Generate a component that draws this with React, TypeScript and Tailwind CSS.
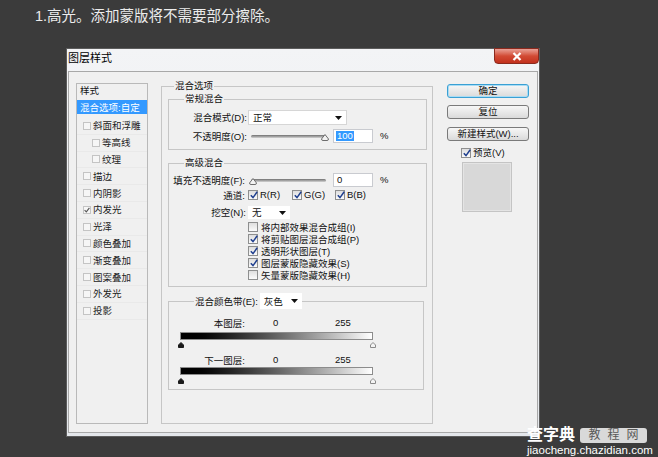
import React from 'react';

function Tick({ color = '#1f3f8f' }: { color?: string }) {
  return (
    <svg width="8" height="8" viewBox="0 0 8 8" className="absolute left-[1px] top-[0px]">
      <path d="M0.8 4.2 L3 6.6 L7.2 0.8" fill="none" stroke={color} strokeWidth="1.5" />
    </svg>
  );
}

function Check({ on }: { on?: boolean }) {
  return (
    <span className="relative inline-block w-[10px] h-[10px] shrink-0 border border-[#8e8f8f] bg-linear-to-b from-[#dedede] to-[#fbfbfb]">
      {on && <Tick />}
    </span>
  );
}

function ListCheck({ on }: { on?: boolean }) {
  return (
    <span className="relative inline-block w-[8px] h-[8px] shrink-0 border border-[#c4c4c4] bg-[#f6f6f6]">
      {on && (
        <svg width="6" height="6" viewBox="0 0 6 6" className="absolute left-0 top-0">
          <path d="M0.6 3.2 L2.3 4.9 L5.4 0.8" fill="none" stroke="#555" strokeWidth="1.1" />
        </svg>
      )}
    </span>
  );
}

function Arrow() {
  return (
    <svg width="7" height="4" viewBox="0 0 7 4">
      <path d="M0 0 L7 0 L3.5 4 Z" fill="#111" />
    </svg>
  );
}

function Knob() {
  return (
    <svg width="8" height="7" viewBox="0 0 8 7">
      <path d="M4 0.5 L7.5 5 Q7.5 6.5 6 6.5 L2 6.5 Q0.5 6.5 0.5 5 Z" fill="#f2f2f2" stroke="#6d6d6d" strokeWidth="1" />
    </svg>
  );
}

function Marker({ dark }: { dark?: boolean }) {
  return (
    <svg width="6" height="6" viewBox="0 0 6 6">
      <path
        d="M3 0.5 L5.5 3 L5.5 5.5 L0.5 5.5 L0.5 3 Z"
        fill={dark ? '#1a1a1a' : '#f4f4f4'}
        stroke={dark ? '#1a1a1a' : '#8a8a8a'}
        strokeWidth="1"
      />
    </svg>
  );
}

function Slider({ knobLeft }: { knobLeft: 'start' | 'end' }) {
  return (
    <div className="relative ml-[2px] w-[84px] h-[14px] flex items-center">
      <div className="ml-[2px] w-[75px] h-[3px] rounded-full bg-linear-to-b from-[#707070] to-[#d4d4d4]" />
      <div className={`absolute top-[5px] ${knobLeft === 'start' ? 'left-0' : 'left-[72px]'}`}>
        <Knob />
      </div>
    </div>
  );
}

const listItems: { label: string; sub?: boolean; on?: boolean }[] = [
  { label: '斜面和浮雕' },
  { label: '等高线', sub: true },
  { label: '纹理', sub: true },
  { label: '描边' },
  { label: '内阴影' },
  { label: '内发光', on: true },
  { label: '光泽' },
  { label: '颜色叠加' },
  { label: '渐变叠加' },
  { label: '图案叠加' },
  { label: '外发光' },
  { label: '投影' },
];

const options: { label: string; on: boolean }[] = [
  { label: '将内部效果混合成组(I)', on: false },
  { label: '将剪贴图层混合成组(P)', on: true },
  { label: '透明形状图层(T)', on: true },
  { label: '图层蒙版隐藏效果(S)', on: true },
  { label: '矢量蒙版隐藏效果(H)', on: false },
];

function Button({ label, primary }: { label: string; primary?: boolean }) {
  return (
    <div
      className={`w-[82px] h-[14px] flex items-center justify-center rounded-[3px] border bg-linear-to-b from-[#f7f7f7] to-[#dadada] text-[9.5px] leading-[10px] text-[#111] ${
        primary ? 'border-[#3aa0d4] shadow-[inset_0_0_0_1px_#a9dcf4]' : 'border-[#7a7a7a]'
      }`}
    >
      {label}
    </div>
  );
}

export default function App() {
  return (
    <div className="relative w-[658px] h-[457px] overflow-hidden bg-[#3b3b3b] font-['Liberation_Sans','Noto_Sans_CJK_SC',sans-serif]">
      <p className="pl-[35px] pt-[6px] text-[14.5px] leading-[20px] text-[#ececec]">1.高光。添加蒙版将不需要部分擦除。</p>

      <div className="ml-[66px] mt-[22px] w-[474px] h-[389px] flex flex-col border border-[#5c5c5c] bg-linear-to-b from-[#f3f4f6] to-[#e4e7eb]">
        <div className="h-[22px] flex items-start justify-between pl-[1px]">
          <span className="mt-[4px] text-[11px] leading-[11px] text-black">图层样式</span>
          <div className="-mt-[1px] w-[45px] h-[16px] flex items-center justify-center rounded-b-[4px] border border-[#8a2a1e] bg-linear-to-b from-[#e8a096] via-[#d24a34] to-[#c2301c]">
            <svg width="10" height="9" viewBox="0 0 10 9">
              <path d="M1.5 1 L8.5 8 M8.5 1 L1.5 8" stroke="#fff" strokeWidth="2.2" />
            </svg>
          </div>
        </div>

        <div className="ml-[1px] mr-[1px] mb-[3px] flex-1 flex items-start border border-[#a8a8a8] bg-[#f0f0f0] text-[9.5px] text-[#111]">
          {/* left style list */}
          <div className="ml-[7px] mt-[11px] w-[72px] h-[341px] border border-[#b9b9b9] bg-[#f0f0f0]">
            <div className="h-[16px] pt-[1px] pl-[3px] leading-[11px]">样式</div>
            <div className="h-[14px] flex items-center pl-[3px] bg-[#3399ff] text-white leading-[11px]">混合选项:自定</div>
            <div className="mt-[4px]">
              {listItems.map((it) => (
                <div
                  key={it.label}
                  className={`h-[16.8px] flex items-center gap-[2px] leading-[11px] text-[#222] border-b border-[#e9e9e9] ${it.sub ? 'pl-[15px]' : 'pl-[6px]'}`}
                >
                  <ListCheck on={it.on} />
                  <span>{it.label}</span>
                </div>
              ))}
            </div>
          </div>

          {/* blending options */}
          <div className="relative ml-[13px] mt-[14px] w-[272px] h-[338px] border border-[#c6c6c6]">
            <span className="absolute left-[12px] -top-[7px] px-[1px] bg-[#f0f0f0] leading-[12px]">混合选项</span>

            <div className="relative ml-[6px] mt-[12px] w-[259px] h-[51px] border border-[#c6c6c6]">
              <span className="absolute left-[15px] -top-[7px] px-[1px] bg-[#f0f0f0] leading-[12px]">常规混合</span>
              <div className="mt-[10px] h-[15px] flex items-center">
                <span className="w-[78px] text-right leading-[11px]">混合模式(D):</span>
                <div className="ml-[1px] w-[99px] h-[15px] flex items-center justify-between pl-[4px] pr-[4px] bg-white border border-[#d6d6d6]">
                  <span className="leading-[11px]">正常</span>
                  <Arrow />
                </div>
              </div>
              <div className="mt-[4px] h-[14px] flex items-center">
                <span className="w-[78px] text-right leading-[11px]">不透明度(O):</span>
                <Slider knobLeft="end" />
                <div className="w-[40px] h-[14px] flex items-center pl-[2px] bg-white border border-[#c9cbd0]">
                  <span className="px-[1px] bg-[#3399ff] text-white leading-[10px]">100</span>
                </div>
                <span className="ml-[7px] leading-[10px]">%</span>
              </div>
            </div>

            <div className="relative ml-[6px] mt-[13px] w-[259px] h-[124px] border border-[#c6c6c6]">
              <span className="absolute left-[15px] -top-[7px] px-[1px] bg-[#f0f0f0] leading-[12px]">高级混合</span>
              <div className="mt-[9px] h-[14px] flex items-center">
                <span className="w-[78px] pr-[2px] text-right leading-[11px]">填充不透明度(F):</span>
                <Slider knobLeft="start" />
                <div className="w-[40px] h-[14px] flex items-center pl-[3px] bg-white border border-[#c9cbd0]">
                  <span className="leading-[10px]">0</span>
                </div>
                <span className="ml-[7px] leading-[10px]">%</span>
              </div>
              <div className="mt-[2px] h-[12px] flex items-center">
                <span className="w-[78px] pr-[2px] text-right leading-[11px]">通道:</span>
                <div className="ml-[1px] flex items-center gap-[2px] w-[44px]">
                  <Check on />
                  <span className="leading-[10px]">R(R)</span>
                </div>
                <div className="flex items-center gap-[2px] w-[43px]">
                  <Check on />
                  <span className="leading-[10px]">G(G)</span>
                </div>
                <div className="flex items-center gap-[2px]">
                  <Check on />
                  <span className="leading-[10px]">B(B)</span>
                </div>
              </div>
              <div className="mt-[5px] h-[13px] flex items-center">
                <span className="w-[78px] pr-[1px] text-right leading-[11px]">挖空(N):</span>
                <div className="ml-[1px] w-[42px] h-[13px] flex items-center justify-between pl-[4px] pr-[4px] bg-white">
                  <span className="leading-[11px]">无</span>
                  <Arrow />
                </div>
              </div>
              <div className="mt-[2px] ml-[79px]">
                {options.map((o) => (
                  <div key={o.label} className="h-[12px] flex items-center gap-[3px]">
                    <Check on={o.on} />
                    <span className="leading-[11px]">{o.label}</span>
                  </div>
                ))}
              </div>
            </div>

            <div className="relative ml-[6px] mt-[14px] w-[256px] h-[89px] border border-[#c6c6c6]">
              <div className="absolute left-[25px] -top-[9px] flex items-center bg-[#f0f0f0] pl-[1px]">
                <span className="leading-[11px]">混合颜色带(E):</span>
                <div className="ml-[2px] w-[42px] h-[16px] flex items-center justify-between pl-[4px] pr-[4px] bg-white">
                  <span className="leading-[11px]">灰色</span>
                  <Arrow />
                </div>
              </div>
              <div className="mt-[15px] h-[12px] flex items-center">
                <span className="w-[76px] text-right leading-[11px]">本图层:</span>
                <span className="ml-[28px] w-[62px] leading-[10px]">0</span>
                <span className="leading-[10px]">255</span>
              </div>
              <div className="mt-[3px] ml-[11px] w-[193px] h-[8px] border border-[#8c8c8c] bg-linear-to-r from-black to-white" />
              <div className="mt-[2px] ml-[9px] w-[198px] h-[6px] flex justify-between">
                <Marker dark />
                <Marker />
              </div>
              <div className="mt-[6px] h-[12px] flex items-center">
                <span className="w-[76px] text-right leading-[11px]">下一图层:</span>
                <span className="ml-[28px] w-[62px] leading-[10px]">0</span>
                <span className="leading-[10px]">255</span>
              </div>
              <div className="mt-[1px] ml-[11px] w-[193px] h-[8px] border border-[#8c8c8c] bg-linear-to-r from-black to-white" />
              <div className="mt-[3px] ml-[9px] w-[198px] h-[6px] flex justify-between">
                <Marker dark />
                <Marker />
              </div>
            </div>
          </div>

          {/* right buttons */}
          <div className="ml-[14px] mt-[12px] w-[82px] flex flex-col">
            <Button label="确定" primary />
            <div className="mt-[7px]">
              <Button label="复位" />
            </div>
            <div className="mt-[8px]">
              <Button label="新建样式(W)..." />
            </div>
            <div className="mt-[6px] h-[11px] pl-[14px] flex items-center gap-[2px]">
              <Check on />
              <span className="leading-[11px]">预览(V)</span>
            </div>
            <div className="mt-[4px] ml-[15px] w-[50px] h-[50px] border border-[#c4c4c4] bg-[#d8d8d8] shadow-[inset_0_0_0_1px_#e4e4e4]" />
          </div>
        </div>
      </div>

      {/* watermark */}
      <div className="absolute left-[527px] top-[427px] flex flex-col">
        <div className="flex items-center">
          <span className="text-[16px] leading-[16px] font-bold text-white">查字典</span>
          <span className="ml-[5px] w-[67px] h-[15px] flex items-center justify-center rounded-[3px] bg-[#d9d9d9] text-[12px] leading-[12px] text-[#5a5a5a] tracking-[7px] pl-[7px]">教程网</span>
        </div>
        <span className="mt-[2px] text-[11.5px] leading-[11px] text-white">jiaocheng.chazidian.com</span>
      </div>
    </div>
  );
}
